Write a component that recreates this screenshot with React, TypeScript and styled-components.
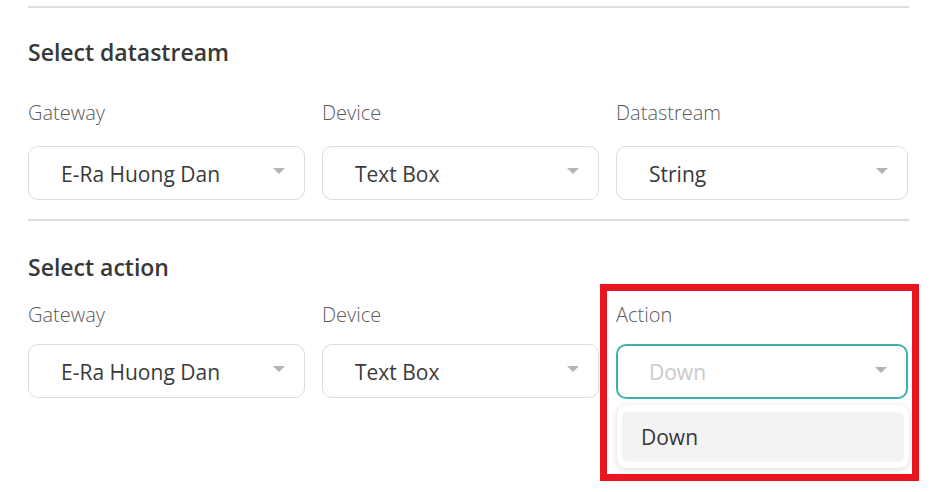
import React from "react";
import styled, { createGlobalStyle } from "styled-components";

const Global = createGlobalStyle`
  html, body { margin: 0; padding: 0; background: #ffffff; }
  body { font-family: "Open Sans", "Noto Sans", Arial, sans-serif; }
  * { box-sizing: border-box; }
`;

const Page = styled.div`
  position: relative;
  width: 934px;
  height: 492px;
  padding: 6px 25px 0 28px;
  overflow: hidden;
`;

const Divider = styled.div<{ $top?: number }>`
  height: 2px;
  background: #dedede;
  margin-top: ${(p) => p.$top ?? 0}px;
`;

const Heading = styled.h2<{ $top: number }>`
  margin: ${(p) => p.$top}px 0 0;
  font-size: 23px;
  line-height: 28px;
  font-weight: 600;
  color: #383838;
`;

const Grid = styled.div<{ $top: number }>`
  display: grid;
  grid-template-columns: 277px 277px 292px;
  column-gap: 17px;
  margin-top: ${(p) => p.$top}px;
`;

const Field = styled.div`
  position: relative;
  display: flex;
  flex-direction: column;
`;

const Label = styled.div<{ $gap: number }>`
  font-size: 20px;
  line-height: 24px;
  color: #5a5a5a;
  font-weight: 300;
  margin-bottom: ${(p) => p.$gap}px;
`;

const Box = styled.div<{ $focused?: boolean }>`
  position: relative;
  display: flex;
  align-items: center;
  height: ${(p) => (p.$focused ? 55 : 54)}px;
  padding: 0 0 0 ${(p) => (p.$focused ? 31 : 32)}px;
  border: ${(p) => (p.$focused ? "2px solid #3fb0ad" : "1px solid #dcdcdc")};
  border-radius: 10px;
  background: #fff;
`;

const Value = styled.span<{ $placeholder?: boolean }>`
  font-size: 21px;
  line-height: 26px;
  color: ${(p) => (p.$placeholder ? "#c9c9c9" : "#3a3a3a")};
  margin-top: 1px;
`;

const Caret = styled.span`
  position: absolute;
  right: 19px;
  top: 50%;
  margin-top: -5px;
  width: 0;
  height: 0;
  border-left: 6px solid transparent;
  border-right: 6px solid transparent;
  border-top: 6px solid #b4b4b4;
`;

const Menu = styled.div`
  position: absolute;
  left: 1px;
  right: -1px;
  top: calc(100% + 6px);
  padding: 7px 5px 6px;
  border-radius: 9px;
  background: #fff;
  box-shadow: 0 2px 8px rgba(0, 0, 0, 0.12), 0 0 1px rgba(0, 0, 0, 0.12);
`;

const MenuItem = styled.div`
  height: 50px;
  display: flex;
  align-items: center;
  padding-left: 19px;
  border-radius: 6px;
  background: #f3f3f3;
  font-size: 21px;
  color: #363636;
`;

const Highlight = styled.div`
  position: absolute;
  left: 600px;
  top: 284px;
  width: 319px;
  height: 197px;
  border: 7px solid #e8161f;
  pointer-events: none;
`;

type Sel = { label: string; value: string; focused?: boolean; open?: boolean };

const SelectField: React.FC<Sel & { gap: number }> = ({ label, value, focused, open, gap }) => (
  <Field>
    <Label $gap={gap}>{label}</Label>
    <Box $focused={focused}>
      <Value $placeholder={focused}>{value}</Value>
      <Caret />
    </Box>
    {open && (
      <Menu>
        <MenuItem>{value}</MenuItem>
      </Menu>
    )}
  </Field>
);

export default function App() {
  return (
    <>
      <Global />
      <Page>
        <Divider />
        <Heading $top={30}>Select datastream</Heading>
        <Grid $top={35}>
          <SelectField gap={21} label="Gateway" value="E-Ra Huong Dan" />
          <SelectField gap={21} label="Device" value="Text Box" />
          <SelectField gap={21} label="Datastream" value="String" />
        </Grid>
        <Divider $top={19} />
        <Heading $top={32}>Select action</Heading>
        <Grid $top={22}>
          <SelectField gap={17} label="Gateway" value="E-Ra Huong Dan" />
          <SelectField gap={17} label="Device" value="Text Box" />
          <SelectField gap={17} label="Action" value="Down" focused open />
        </Grid>
        <Highlight />
      </Page>
    </>
  );
}
